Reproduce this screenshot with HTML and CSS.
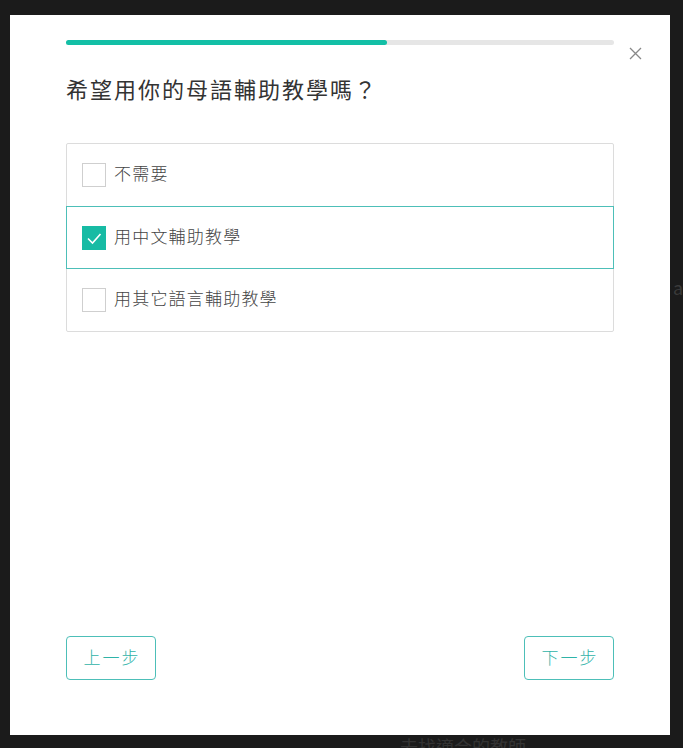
FILE: index.html
```html
<!DOCTYPE html>
<html lang="zh-Hant">
<head>
    <meta charset="UTF-8">
    <meta name="viewport" content="width=device-width, initial-scale=1.0">
    <title>母語輔助教學</title>
    <link rel="stylesheet" href="styles.css">
</head>
<body>
    <div class="backdrop">
        <span class="behind-right">at</span>
        <span class="behind-bottom">去找適合的教師</span>
        <div class="modal">
            <button class="close" type="button" aria-label="關閉">
                <svg width="13" height="13" viewBox="0 0 13 13">
                    <path d="M1 1 L12 12 M12 1 L1 12" stroke="#888" stroke-width="1.3" fill="none"/>
                </svg>
            </button>
            <div class="progress"><div class="progress-fill" style="width: 58.5%"></div></div>
            <h1>希望用你的母語輔助教學嗎？</h1>
            <ul class="options">
                <li class="option">
                    <span class="box"></span>
                    <span class="label">不需要</span>
                </li>
                <li class="option selected">
                    <span class="box">
                        <svg width="24" height="24" viewBox="0 0 24 24">
                            <path d="M6 12.5 L10.5 17 L18.5 8" stroke="#fff" stroke-width="1.6" fill="none"/>
                        </svg>
                    </span>
                    <span class="label">用中文輔助教學</span>
                </li>
                <li class="option">
                    <span class="box"></span>
                    <span class="label">用其它語言輔助教學</span>
                </li>
            </ul>
            <div class="footer">
                <button class="step" type="button">上一步</button>
                <button class="step" type="button">下一步</button>
            </div>
        </div>
    </div>
</body>
</html>
```

FILE: styles.css
```css
body {
    margin: 0;
    padding: 0;
    background-color: #1b1b1b;
    font-family: "Noto Sans CJK TC", "Noto Sans", sans-serif;
}
.backdrop {
    position: relative;
    width: 683px;
    height: 748px;
    overflow: hidden;
    padding: 15px 0 0 10px;
    box-sizing: border-box;
}
.behind-right {
    position: absolute;
    left: 673px;
    top: 274px;
    color: #3a3a3a;
    font-size: 18px;
}
.behind-bottom {
    position: absolute;
    left: 400px;
    top: 733px;
    color: #333;
    font-size: 18px;
}
.modal {
    position: relative;
    width: 660px;
    height: 720px;
    background: #fff;
    box-sizing: border-box;
    padding: 25px 56px 55px;
    display: flex;
    flex-direction: column;
}
.close {
    position: absolute;
    top: 32px;
    right: 28px;
    padding: 0;
    border: none;
    background: none;
    width: 13px;
    height: 13px;
    cursor: pointer;
}
.close svg {
    display: block;
}
.progress {
    height: 5px;
    background-color: #e6e6e6;
    border-radius: 3px;
}
.progress-fill {
    height: 100%;
    background-color: #13bfa6;
    border-radius: 3px;
}
h1 {
    margin: 27px 0 0;
    font-size: 22px;
    line-height: 32px;
    font-weight: 400;
    color: #333;
    letter-spacing: 2px;
}
.options {
    list-style: none;
    margin: 39px 0 0;
    padding: 0;
    border: 1px solid #dcdcdc;
    border-radius: 2px;
}
.option {
    display: flex;
    align-items: center;
    height: 62px;
    padding: 0 15px;
    border-top: 1px solid #dcdcdc;
}
.option:first-child {
    border-top: none;
    height: 62px;
}
.option.selected {
    border: 1px solid #4dbfb8;
    margin: 0 -1px;
    height: 61px;
}
.option.selected + .option {
    border-top: none;
}
.box {
    width: 22px;
    height: 22px;
    border: 1px solid #cfcfcf;
    box-sizing: content-box;
    margin-right: 8px;
}
.selected .box {
    border-color: #17bba4;
    background-color: #17bba4;
    width: 24px;
    height: 24px;
    border: none;
}
.box svg {
    display: block;
}
.label {
    font-size: 17px;
    font-weight: 300;
    color: #444;
    letter-spacing: 1.2px;
    padding-bottom: 5px;
}
.footer {
    margin-top: auto;
    display: flex;
    justify-content: space-between;
}
.step {
    width: 90px;
    height: 44px;
    border: 1.5px solid #4dbfb8;
    border-radius: 4px;
    background: #fff;
    color: #2fb3a8;
    font-family: inherit;
    font-size: 17px;
    font-weight: 300;
    letter-spacing: 2px;
    padding: 0 0 4px 2px;
    cursor: pointer;
}
```
